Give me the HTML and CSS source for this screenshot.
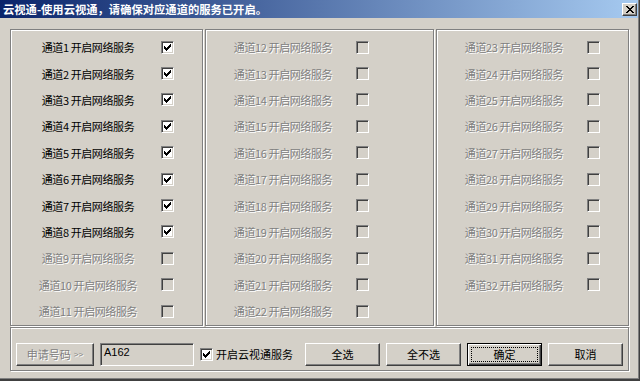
FILE: index.html
```html
<!DOCTYPE html>
<html lang="zh-CN">
<head>
  <meta charset="UTF-8" />
  <title>云视通</title>
  <link rel="stylesheet" href="styles.css">
</head>
<body>
  <svg class="defs" width="0" height="0">
    <symbol id="chk" viewBox="0 0 7 7">
      <path d="M0 2h1v3h-1z M1 3h1v3h-1z M2 4h1v3h-1z M3 3h1v3h-1z M4 2h1v3h-1z M5 1h1v3h-1z M6 0h1v3h-1z" fill="#000"/>
    </symbol>
  </svg>

  <div class="window">
    <div class="titlebar">
      <span class="title">云视通-使用云视通，请确保对应通道的服务已开启。</span>
      <span class="close">
        <svg width="8" height="7" viewBox="0 0 8 7" shape-rendering="crispEdges">
          <path d="M0 0h2v1h-2z M6 0h2v1h-2z M1 1h2v1h-2z M5 1h2v1h-2z M2 2h4v1h-4z M3 3h2v1h-2z M2 4h4v1h-4z M1 5h2v1h-2z M5 5h2v1h-2z M0 6h2v1h-2z M6 6h2v1h-2z" fill="#000"/>
        </svg>
      </span>
    </div>

    <div class="main">
      <div class="panels">
        <div class="panel p1">
          <div class="row"><span class="lbl">通道1 开启网络服务</span><span class="cb"><svg><use href="#chk"/></svg></span></div>
          <div class="row"><span class="lbl">通道2 开启网络服务</span><span class="cb"><svg><use href="#chk"/></svg></span></div>
          <div class="row"><span class="lbl">通道3 开启网络服务</span><span class="cb"><svg><use href="#chk"/></svg></span></div>
          <div class="row"><span class="lbl">通道4 开启网络服务</span><span class="cb"><svg><use href="#chk"/></svg></span></div>
          <div class="row"><span class="lbl">通道5 开启网络服务</span><span class="cb"><svg><use href="#chk"/></svg></span></div>
          <div class="row"><span class="lbl">通道6 开启网络服务</span><span class="cb"><svg><use href="#chk"/></svg></span></div>
          <div class="row"><span class="lbl">通道7 开启网络服务</span><span class="cb"><svg><use href="#chk"/></svg></span></div>
          <div class="row"><span class="lbl">通道8 开启网络服务</span><span class="cb"><svg><use href="#chk"/></svg></span></div>
          <div class="row off"><span class="lbl">通道9 开启网络服务</span><span class="cb"></span></div>
          <div class="row off"><span class="lbl">通道10 开启网络服务</span><span class="cb"></span></div>
          <div class="row off"><span class="lbl">通道11 开启网络服务</span><span class="cb"></span></div>
        </div>

        <div class="panel p2">
          <div class="row off"><span class="lbl">通道12 开启网络服务</span><span class="cb"></span></div>
          <div class="row off"><span class="lbl">通道13 开启网络服务</span><span class="cb"></span></div>
          <div class="row off"><span class="lbl">通道14 开启网络服务</span><span class="cb"></span></div>
          <div class="row off"><span class="lbl">通道15 开启网络服务</span><span class="cb"></span></div>
          <div class="row off"><span class="lbl">通道16 开启网络服务</span><span class="cb"></span></div>
          <div class="row off"><span class="lbl">通道17 开启网络服务</span><span class="cb"></span></div>
          <div class="row off"><span class="lbl">通道18 开启网络服务</span><span class="cb"></span></div>
          <div class="row off"><span class="lbl">通道19 开启网络服务</span><span class="cb"></span></div>
          <div class="row off"><span class="lbl">通道20 开启网络服务</span><span class="cb"></span></div>
          <div class="row off"><span class="lbl">通道21 开启网络服务</span><span class="cb"></span></div>
          <div class="row off"><span class="lbl">通道22 开启网络服务</span><span class="cb"></span></div>
        </div>

        <div class="panel p3">
          <div class="row off"><span class="lbl">通道23 开启网络服务</span><span class="cb"></span></div>
          <div class="row off"><span class="lbl">通道24 开启网络服务</span><span class="cb"></span></div>
          <div class="row off"><span class="lbl">通道25 开启网络服务</span><span class="cb"></span></div>
          <div class="row off"><span class="lbl">通道26 开启网络服务</span><span class="cb"></span></div>
          <div class="row off"><span class="lbl">通道27 开启网络服务</span><span class="cb"></span></div>
          <div class="row off"><span class="lbl">通道28 开启网络服务</span><span class="cb"></span></div>
          <div class="row off"><span class="lbl">通道29 开启网络服务</span><span class="cb"></span></div>
          <div class="row off"><span class="lbl">通道30 开启网络服务</span><span class="cb"></span></div>
          <div class="row off"><span class="lbl">通道31 开启网络服务</span><span class="cb"></span></div>
          <div class="row off"><span class="lbl">通道32 开启网络服务</span><span class="cb"></span></div>
        </div>
      </div>

      <div class="bottom">
        <span class="btn apply">申请号码 <span class="arr">&gt;&gt;</span></span>
        <span class="field">A162</span>
        <span class="cb on-bar"><svg><use href="#chk"/></svg></span>
        <span class="cb-text">开启云视通服务</span>
        <span class="btn first">全选</span>
        <span class="btn">全不选</span>
        <span class="btn def">确定</span>
        <span class="btn">取消</span>
      </div>
    </div>
  </div>
</body>
</html>
```

FILE: styles.css
```css
:root {
  --face: #d4d0c8;
  --shadow: #808080;
  --dark: #404040;
  --light: #fff;
}
body {
  margin: 0;
  background: var(--face);
  font-family: "Noto Sans CJK SC", "Liberation Sans", sans-serif;
  font-size: 11px;
  color: #000;
}
.defs {
  position: absolute;
  width: 0;
  height: 0;
}
.window {
  width: 640px;
  height: 381px;
  box-sizing: border-box;
  border-right: 1px solid var(--dark);
  border-bottom: 2px solid var(--dark);
  box-shadow: inset -1px -1px var(--shadow);
}
.titlebar {
  height: 18px;
  margin-right: 1px;
  display: flex;
  align-items: center;
  padding-left: 3px;
  background: linear-gradient(to right, #0a246a, #a6caf0);
  color: #fff;
}
.title {
  font-weight: bold;
  font-size: 11.3px;
  white-space: nowrap;
}
.close {
  margin-left: auto;
  margin-right: 1px;
  width: 15px;
  height: 13px;
  box-sizing: border-box;
  background: var(--face);
  border: 1px solid;
  border-color: var(--light) var(--dark) var(--dark) var(--light);
  box-shadow: inset -1px -1px var(--shadow);
  display: flex;
  align-items: center;
  justify-content: center;
}
.close svg {
  display: block;
}
.main {
  padding: 11px 0 0 10px;
}
.panels {
  display: flex;
}
.panel {
  box-sizing: border-box;
  height: 297px;
  border: 1px solid var(--shadow);
  box-shadow: inset 1px 1px var(--light), 1px 1px var(--light);
  padding: 4px 0 0 7px;
}
.p1, .p3 {
  width: 193px;
}
.p2 {
  width: 229px;
}
.p2, .p3 {
  margin-left: 2px;
}
.row {
  display: grid;
  grid-template-columns: 140px 13px;
  column-gap: 3px;
  align-items: center;
  height: 26.4px;
}
.lbl {
  text-align: center;
  white-space: nowrap;
  letter-spacing: -0.4px;
}
.row.off .lbl {
  color: var(--shadow);
  text-shadow: 1px 1px 0 var(--light);
}
.cb {
  width: 13px;
  height: 13px;
  box-sizing: border-box;
  border: 1px solid;
  border-color: var(--shadow) var(--light) var(--light) var(--shadow);
  box-shadow: inset 1px 1px var(--dark), inset -1px -1px var(--face);
  background: var(--light);
}
.cb svg {
  display: block;
  width: 7px;
  height: 7px;
  margin: 2px 0 0 2px;
  shape-rendering: crispEdges;
}
.row.off .cb {
  background: var(--face);
}
.bottom {
  margin-top: 1px;
  width: 619px;
  height: 44px;
  box-sizing: border-box;
  border: 1px solid var(--shadow);
  box-shadow: inset 1px 1px var(--light), 1px 1px var(--light);
  padding: 10px 5px 0 5px;
  display: flex;
  align-items: center;
  align-self: flex-start;
}
.btn {
  position: relative;
  width: 75px;
  height: 23px;
  box-sizing: border-box;
  margin-left: 6px;
  border: 1px solid;
  border-color: var(--light) var(--dark) var(--dark) var(--light);
  box-shadow: inset -1px -1px var(--shadow);
  display: flex;
  align-items: center;
  justify-content: center;
  white-space: nowrap;
}
.btn.apply {
  width: 78px;
  margin-left: 0;
  color: var(--shadow);
  text-shadow: 1px 1px 0 var(--light);
}
.arr {
  font-family: "Liberation Sans", sans-serif;
  font-size: 8px;
  margin-left: 3px;
}
.btn.first {
  margin-left: auto;
}
.btn.def {
  border-color: #000;
  box-shadow: inset 1px 1px var(--light), inset -1px -1px var(--dark), inset -2px -2px var(--shadow);
}
.btn.def::after {
  content: "";
  position: absolute;
  top: 3px;
  left: 3px;
  right: 3px;
  bottom: 3px;
  border: 1px dotted #000;
}
.field {
  width: 94px;
  height: 23px;
  box-sizing: border-box;
  margin-left: 6px;
  padding: 2px 0 0 3px;
  border: 1px solid;
  border-color: var(--shadow) var(--light) var(--light) var(--shadow);
  box-shadow: inset 1px 1px var(--dark), inset -1px -1px var(--face);
  font-family: "Liberation Sans", sans-serif;
  font-size: 11px;
  align-self: center;
}
.cb.on-bar {
  margin-left: 6px;
}
.cb-text {
  margin-left: 3px;
  font-size: 11px;
  white-space: nowrap;
}
```
